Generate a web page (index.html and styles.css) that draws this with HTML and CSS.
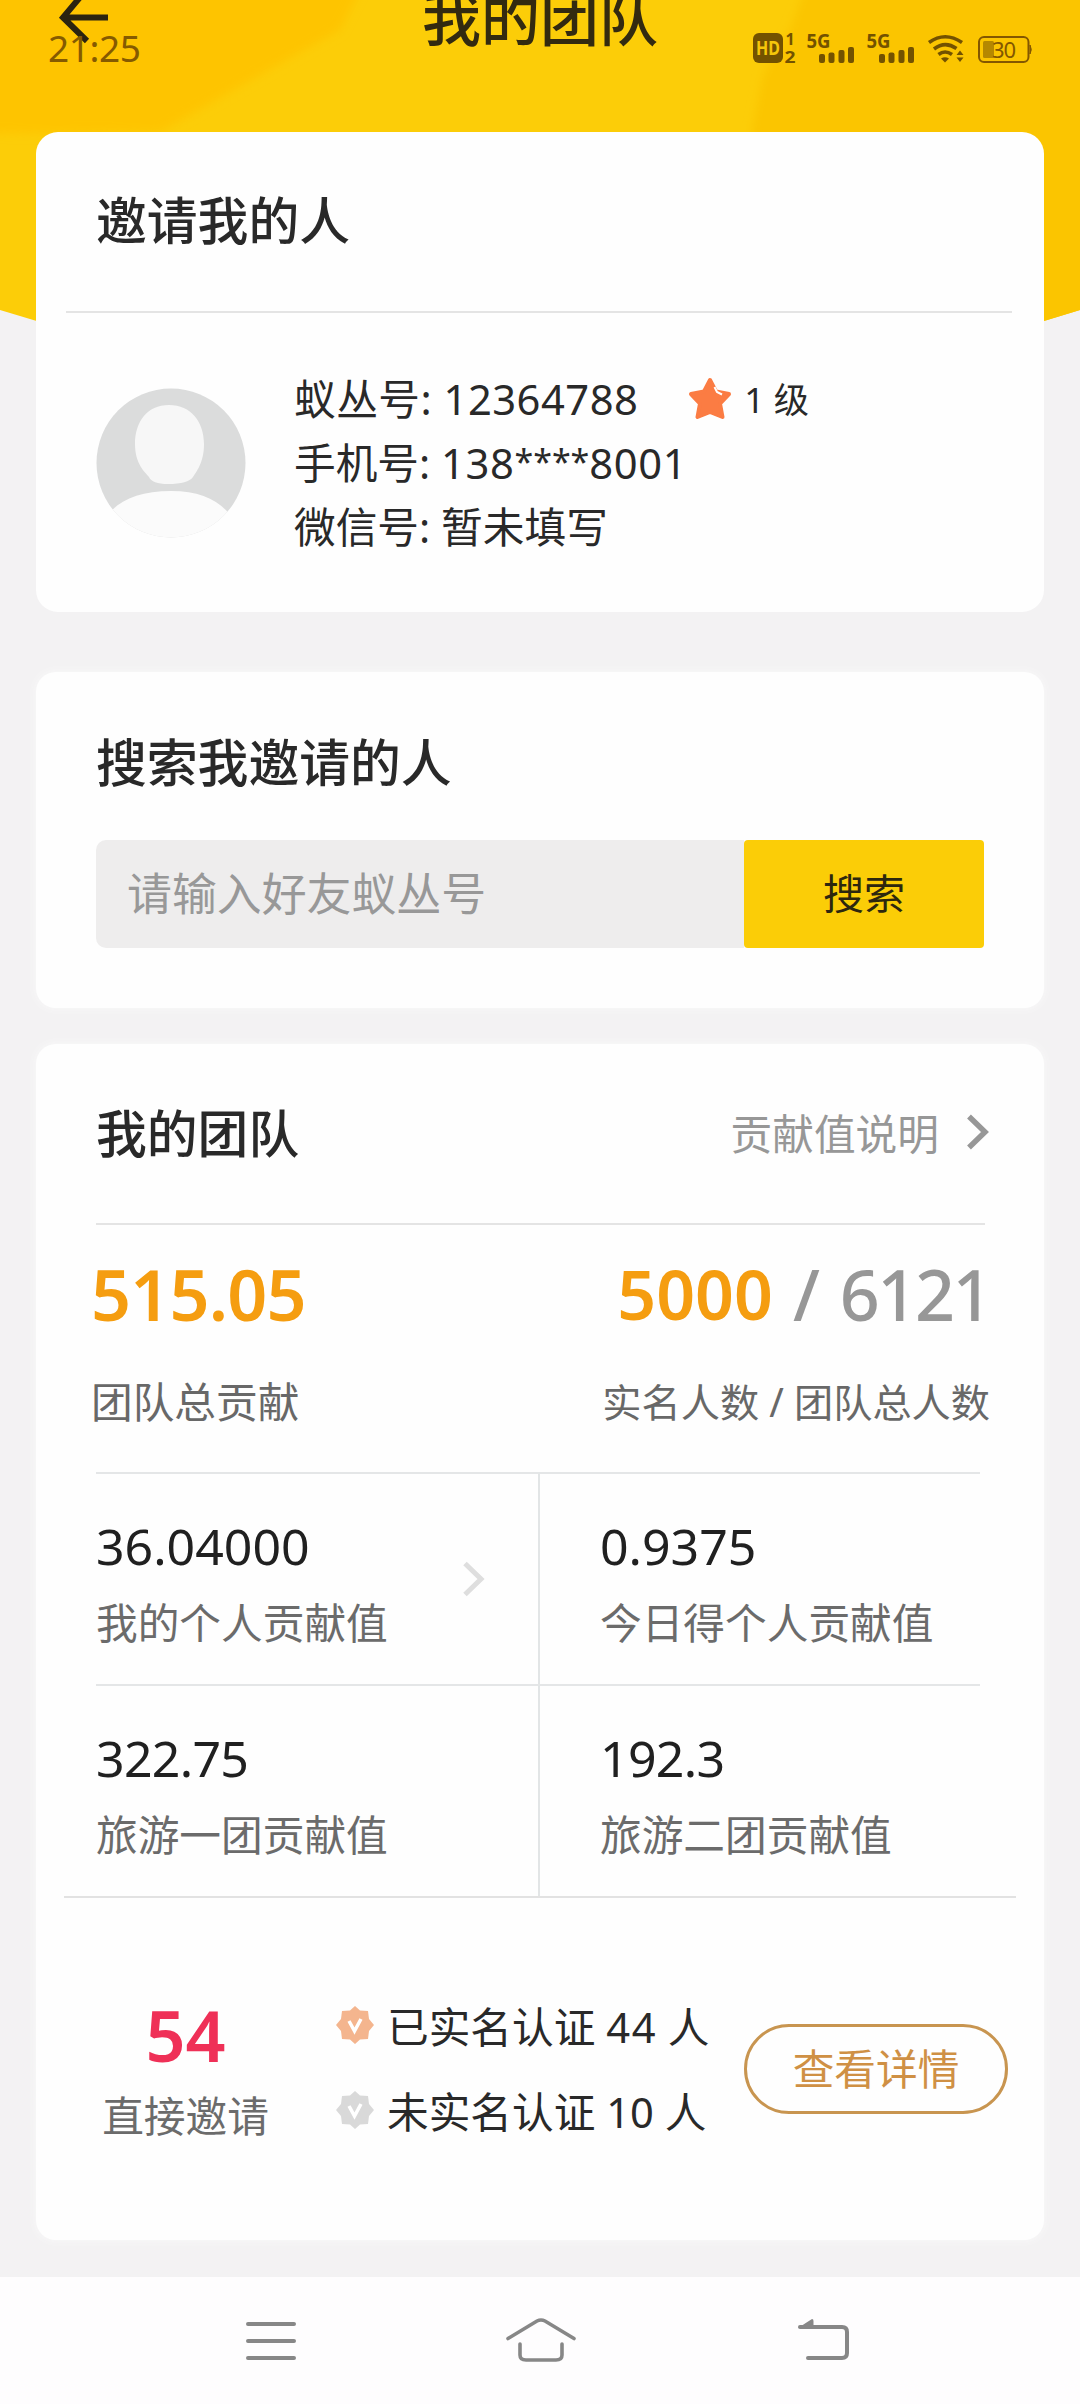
FILE: index.html
```html
<!DOCTYPE html>
<html lang="zh-CN">
<head>
<meta charset="utf-8">
<title>我的团队</title>
<link rel="stylesheet" href="styles.css">
</head>
<body>
<div class="screen">
  <svg class="backdrop" viewBox="0 0 1080 360" aria-hidden="true">
    <defs>
      <filter id="soft" x="-10%" y="-10%" width="120%" height="120%"><feGaussianBlur stdDeviation="5"/></filter>
      <clipPath id="curve"><path d="M0 0H1080V310Q540 480 0 310Z"/></clipPath>
    </defs>
    <g clip-path="url(#curve)">
      <rect width="1080" height="360" fill="#fccd08"/>
      <path d="M-30 -30H370L340 30L260 75L160 132L-30 134Z" fill="#fec404" filter="url(#soft)"/>
      <path d="M812 -30L790 30L763 75L752 132L900 400H1120V-30Z" fill="#fbc504" filter="url(#soft)"/>
    </g>
  </svg>

  <header class="top">
    <div class="app-bar">
      <svg class="back" viewBox="0 0 50 60" width="50" height="60"><path d="M29 1L5 29.500L29 53M5 29.500H50" fill="none" stroke="#2b2310" stroke-width="6"/></svg>
      <h1 class="page-title">我的团队</h1>
    </div>
    <div class="status-bar">
      <span class="clock">21:25</span>
      <svg class="status-icons" viewBox="750 30 285 36" width="285" height="36">
        <g fill="#735200">
          <rect x="753" y="33" width="30" height="30" rx="6"/>
          <text x="768" y="55" class="glyph-hd" textLength="24" lengthAdjust="spacingAndGlyphs">HD</text>
          <text x="790" y="45" class="glyph-num">1</text>
          <text x="790" y="62.500" class="glyph-num" textLength="11" lengthAdjust="spacingAndGlyphs">2</text>
          <text x="818.500" y="48" class="glyph-5g" textLength="24" lengthAdjust="spacingAndGlyphs">5G</text>
          <rect x="819" y="54" width="6" height="9" rx="2"/><rect x="828.500" y="52.500" width="6" height="10.500" rx="2"/><rect x="838.500" y="50" width="6" height="13" rx="2"/><rect x="848" y="47" width="6" height="16" rx="2"/>
          <text x="878.500" y="48" class="glyph-5g" textLength="24" lengthAdjust="spacingAndGlyphs">5G</text>
          <rect x="879" y="54" width="6" height="9" rx="2"/><rect x="888.500" y="52.500" width="6" height="10.500" rx="2"/><rect x="898.500" y="50" width="6" height="13" rx="2"/><rect x="908" y="47" width="6" height="16" rx="2"/>
          <path d="M941 58.500Q945 56 949 58.500L945 62.500Z"/>
          <path d="M956.500 55L960 50.500L963.500 55ZM956.500 57.500L960 62L963.500 57.500Z"/>
        </g>
        <g fill="none" stroke="#735200" stroke-width="3.600">
          <path d="M929 42.500Q945 31 962 42.500"/>
          <path d="M934 49Q945 40.500 956.500 48.500"/>
          <path d="M938.500 54.500Q945 49.500 952 54.500"/>
        </g>
        <rect x="979" y="37" width="49.500" height="25" rx="5" fill="none" stroke="#835700" stroke-width="2"/>
        <path d="M1030 45q2.500 4.500 0 9z" fill="#835700" stroke="#835700"/>
        <rect x="983" y="41" width="11" height="17" rx="1.500" fill="#b58800"/>
        <text x="1004" y="58" class="glyph-battery" textLength="24">30</text>
      </svg>
    </div>
  </header>

  <main class="content">
    <section class="card inviter">
      <h2 class="card-title">邀请我的人</h2>
      <div class="inviter-body">
        <svg class="avatar" viewBox="0 0 150 150" width="150" height="150">
          <clipPath id="disc"><circle cx="75" cy="75" r="74.500"/></clipPath>
          <g clip-path="url(#disc)">
            <rect width="150" height="150" fill="#dbdcdc"/>
            <path d="M73 17C95 17 108 34 108 56C108 75 100 84 97 89Q92 96 72 96Q56 96 53 89C49 84 39 76 39 56C39 34 51 17 73 17Z" fill="#f7f7f7"/>
            <path d="M8 132C20 113 42 103 75 103C107 103 126 114 138 132V155H8Z" fill="#fbfbfb"/>
          </g>
        </svg>
        <div class="facts">
          <div class="fact"><span class="id">蚁丛号: 12364788</span>
            <svg class="star" viewBox="0 0 46 44" width="46" height="44"><path d="M23 3L29 14.500L42 17L33 26.500L35.500 40L23 35L10.500 40L13 26.500L4 17L17 14.500Z" fill="#fb7c43" stroke="#fb7c43" stroke-width="4" stroke-linejoin="round"/><path d="M27.500 10L30 15L35 17.500" fill="none" stroke="#fff" stroke-width="2"/></svg>
            <span class="level">1 级</span></div>
          <div class="fact">手机号: <span class="phone">138<span class="mask">****</span>8001</span></div>
          <div class="fact">微信号: 暂未填写</div>
        </div>
      </div>
    </section>

    <section class="card search">
      <h2 class="card-title">搜索我邀请的人</h2>
      <div class="search-row">
        <div class="field">请输入好友蚁丛号</div>
        <div class="search-btn">搜索</div>
      </div>
    </section>

    <section class="card team">
      <div class="team-head">
        <h2 class="card-title">我的团队</h2>
        <div class="explain"><span>贡献值说明</span><svg viewBox="0 0 24 36" width="24" height="36"><path d="M3 2.500L19 18L3 33.500" fill="none" stroke="#979797" stroke-width="5.500"/></svg></div>
      </div>
      <div class="totals">
        <div class="total">
          <div class="big orange contribution">515.05</div>
          <div class="caption">团队总贡献</div>
        </div>
        <div class="total right">
          <div class="big"><span class="orange verified">5000</span><span class="slash">/</span><span class="members">6121</span></div>
          <div class="caption small">实名人数 / 团队总人数</div>
        </div>
      </div>
      <div class="grid">
        <div class="cell">
          <div><div class="value">36.04000</div><div class="label">我的个人贡献值</div></div>
          <svg class="more" viewBox="0 0 24 36" width="24" height="36"><path d="M3 2.500L19 18L3 33.500" fill="none" stroke="#dedede" stroke-width="5"/></svg>
        </div>
        <div class="cell second"><div><div class="value">0.9375</div><div class="label">今日得个人贡献值</div></div></div>
        <div class="cell"><div><div class="value tight">322.75</div><div class="label">旅游一团贡献值</div></div></div>
        <div class="cell second"><div><div class="value tight">192.3</div><div class="label">旅游二团贡献值</div></div></div>
      </div>
      <div class="invites">
        <div class="direct">
          <div class="count">54</div>
          <div class="label">直接邀请</div>
        </div>
        <div class="auth">
          <div class="auth-row">
            <svg viewBox="0 0 38 38" width="38" height="38"><path d="M19 0L24 4.500L32 5L33 13L38 19L33 25L32 33L24 33.500L19 38L14 33.500L6 33L5 25L0 19L5 13L6 5L14 4.500Z" fill="#f4b58e"/><path d="M13 15L18.500 25L25 13" fill="none" stroke="#fff" stroke-width="3.500"/></svg>
            <span>已实名认证 <b>44</b> 人</span></div>
          <div class="auth-row">
            <svg viewBox="0 0 38 38" width="38" height="38"><path d="M19 0L24 4.500L32 5L33 13L38 19L33 25L32 33L24 33.500L19 38L14 33.500L6 33L5 25L0 19L5 13L6 5L14 4.500Z" fill="#d9d9d9"/><path d="M13 15L18.500 25L25 13" fill="none" stroke="#fff" stroke-width="3.500"/></svg>
            <span>未实名认证 10 人</span></div>
        </div>
        <div class="detail-btn">查看详情</div>
      </div>
    </section>
  </main>

  <nav class="system-nav">
    <svg viewBox="0 0 50 50" width="50" height="50"><path d="M2 8H48M2 25H48M2 42H48" fill="none" stroke="#878787" stroke-width="4" stroke-linecap="round"/></svg>
    <svg class="home" viewBox="0 0 70 50" width="70" height="50"><path d="M2 22.500L31 5Q35 3 39 5L68 22.500M14 28V39Q14 44 20 44H50Q56 44 56 39V28" fill="none" stroke="#878787" stroke-width="3.600" stroke-linecap="round"/></svg>
    <svg class="return" viewBox="0 0 52 50" width="52" height="50"><path d="M2 11H44Q49 11 49 16V37Q49 42 44 42H10" fill="none" stroke="#878787" stroke-width="4" stroke-linecap="round"/><path d="M0 12L14 3Q15.500 3 15.500 5V12Z" fill="#878787"/></svg>
  </nav>
</div>
</body>
</html>
```
FILE: styles.css
```css
* { box-sizing: border-box; }

body {
  margin: 0;
  background: #f3f2f3;
  color: #292929;
  font-family: "Noto Sans", "Noto Sans CJK SC", sans-serif;
  font-size: 41.7px;
}

h1, h2 { margin: 0; font-weight: 500; white-space: nowrap; }
b { font-weight: inherit; }
svg { display: block; flex: none; }

.screen {
  position: relative;
  width: 1080px;
  height: 2404px;
  overflow: hidden;
  display: flex;
  flex-direction: column;
}

.backdrop { position: absolute; top: 0; left: 0; width: 1080px; height: 360px; }

/* Header */
.top { position: relative; height: 132px; flex: none; }
.app-bar {
  display: grid;
  grid-template-columns: 58px 1fr 58px;
  align-items: center;
  height: 36px;
  padding-left: 58px;
  margin-right: 58px;
}
.back { margin: -12px 0; }
.page-title {
  text-align: center;
  font-size: 59px;
  line-height: 36px;
  color: #332a10;
}
.status-bar {
  position: absolute;
  top: 30px;
  left: 48px;
  right: 45px;
  display: flex;
  justify-content: space-between;
  height: 36px;
}
.clock { font-size: 37px; line-height: 36px; color: #855a00; letter-spacing: -0.4px; }
.glyph-hd, .glyph-num, .glyph-5g { font-family: "Noto Sans", sans-serif; font-weight: 700; text-anchor: middle; }
.glyph-hd { font-size: 19px; fill: #f5c60a; }
.glyph-num { font-size: 16px; }
.glyph-5g { font-size: 20px; }
.glyph-battery { font-family: "Noto Sans", sans-serif; font-size: 22px; text-anchor: middle; fill: #835700; }

/* Cards */
.content { position: relative; padding: 0 36px; flex: none; }
.card { background: #fefefe; border-radius: 20px; box-shadow: 0 0 8px #fafafa; }
.card-title { font-size: 50.8px; line-height: 60px; }

.inviter { height: 480px; margin-bottom: 60px; border-radius: 22px; box-shadow: none; }
.inviter .card-title { margin: 0 32px 0 30px; padding: 59px 30px 60px; border-bottom: 2px solid #e4e4e4; }
.inviter-body { display: flex; padding: 53px 60px 0; gap: 48px; }
.avatar { margin-top: 22px; }
.facts { padding-top: 1px; }
.fact { display: flex; align-items: center; height: 64px; line-height: 64px; white-space: pre; }
.id { letter-spacing: 0.5px; }
.phone { letter-spacing: 0.6px; }
.mask { font-size: 34px; letter-spacing: 0; line-height: 1; vertical-align: 5px; }
.star { margin: 0 11px 0 49px; }
.level { font-size: 35.3px; }

.search { height: 336px; margin-bottom: 36px; padding: 61px 60px 0; }
.search-row { display: flex; height: 108px; margin-top: 47px; }
.field {
  width: 648px;
  padding-left: 31px;
  border-radius: 10px 0 0 10px;
  background: #eeeded;
  color: #989898;
  font-size: 44.9px;
  line-height: 107px;
}
.search-btn {
  width: 240px;
  border-radius: 4px;
  background: #fbcd07;
  color: #2d270e;
  font-size: 41px;
  line-height: 106px;
  text-align: center;
}

.team { height: 1196px; padding: 0 28px; }
.team-head {
  display: flex;
  justify-content: space-between;
  align-items: center;
  height: 181px;
  margin: 0 31px 0 32px;
  border-bottom: 2px solid #e4e4e4;
}
.explain { display: flex; align-items: center; gap: 27px; margin: -3px -5px 0 0; color: #979797; }

.totals { display: flex; justify-content: space-between; height: 247px; padding: 29px 26px 0 27px; }
.big { display: flex; font-size: 70px; font-weight: 500; line-height: 80px; height: 80px; }
.orange { color: #f59d10; }
.contribution { font-weight: 600; letter-spacing: -0.8px; }
.right .big { justify-content: flex-end; }
.verified { font-size: 68px; font-weight: 600; }
.slash { margin: 0 20px; color: #979797; }
.members { color: #979797; letter-spacing: -2.5px; }
.caption { margin-top: 38px; line-height: 60px; color: #686868; }
.small { font-size: 39.2px; }

.grid {
  display: grid;
  grid-template-columns: 476px 1fr;
  grid-template-rows: 212px 212px;
  border-bottom: 2px solid #e2e2e2;
  height: 426px;
}
.cell {
  display: flex;
  justify-content: space-between;
  margin-left: 32px;
  padding: 44px 52px 0 0;
  border-top: 2px solid #e4e6e7;
  border-right: 2px solid #e2e5e6;
}
.second { margin: 0 36px 0 0; padding: 44px 0 0 60px; border-right: 0; }
.more { margin-top: 43px; }
.value { font-size: 50px; line-height: 56px; color: #202020; }
.tight { letter-spacing: -0.7px; }
.label { margin-top: 21px; line-height: 56px; color: #6b6b6b; white-space: nowrap; }

.invites { display: flex; padding: 93px 8px 0 38px; }
.direct { width: 167px; text-align: center; }
.count { font-size: 70px; font-weight: 600; line-height: 88px; color: #ef3057; }
.direct .label { margin-top: 9px; }
.auth { margin: -8px 0 0 67px; width: 408px; }
.auth-row { display: flex; align-items: center; height: 84.5px; gap: 13px; white-space: pre; }
.auth-row b { letter-spacing: 1.5px; }
.detail-btn {
  width: 264px;
  height: 90px;
  margin-top: 33px;
  border: 3px solid #c89550;
  border-radius: 45px;
  color: #cf9044;
  line-height: 84px;
  text-align: center;
}

/* System navigation */
.system-nav {
  position: relative;
  display: flex;
  margin-top: auto;
  height: 127px;
  padding: 39px 0 0 246px;
  background: #fefdfe;
}
.home { margin-left: 210px; }
.return { margin-left: 222px; }
```
